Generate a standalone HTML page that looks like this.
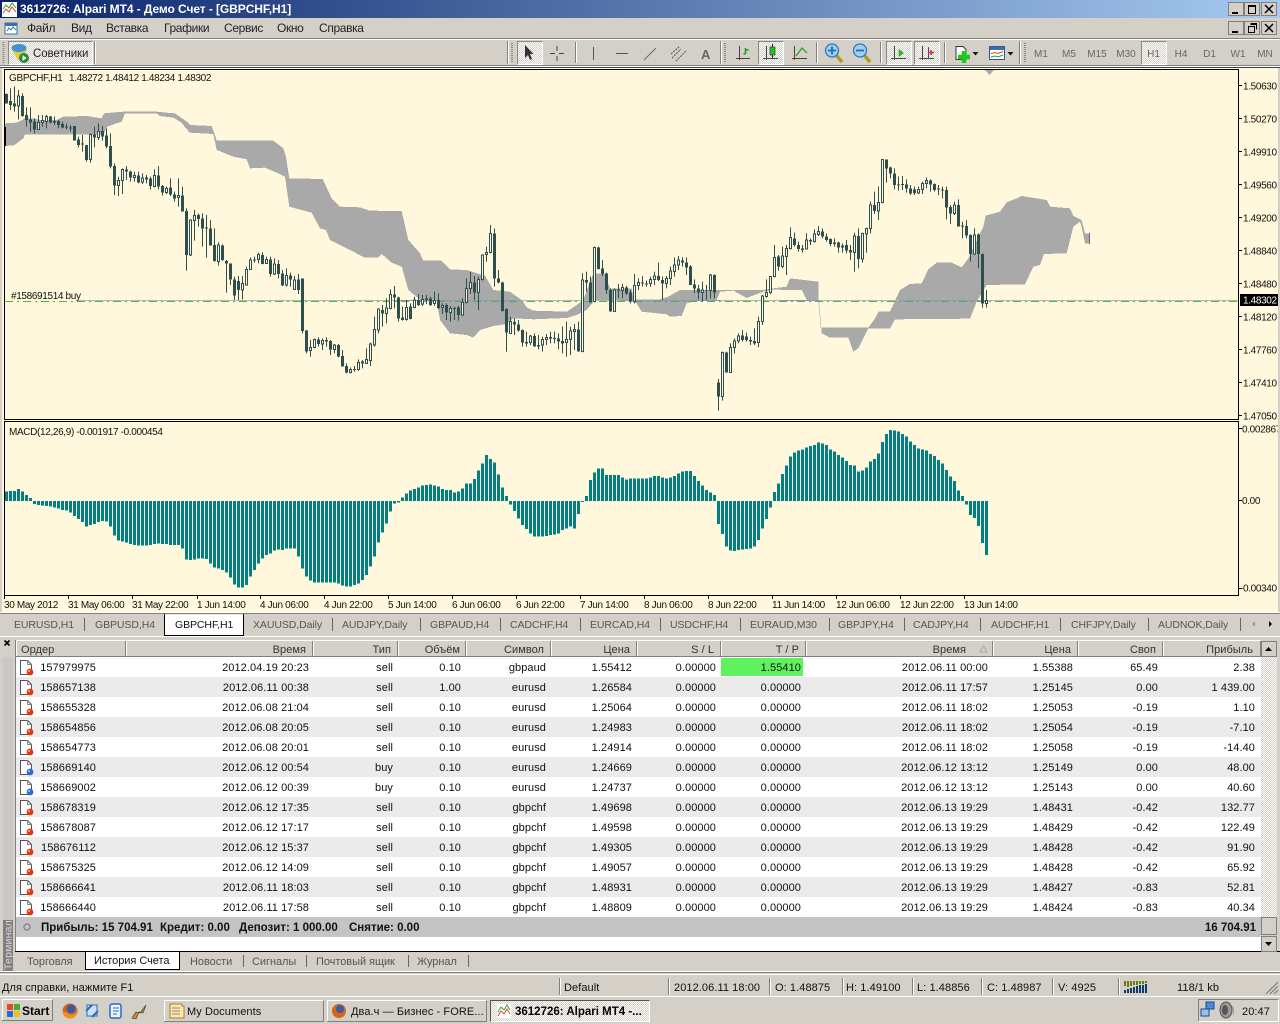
<!DOCTYPE html>
<html><head><meta charset="utf-8"><title>MT4</title>
<style>
html,body{margin:0;padding:0;background:#d4d0c8;width:1280px;height:1024px;overflow:hidden}
svg{display:block;position:absolute;left:0;top:0}
text{font-family:"Liberation Sans",sans-serif;font-size:11px;fill:#000;white-space:pre}
.c{font-size:10px;letter-spacing:-.35px;fill:#111}
.m{font-size:12px;letter-spacing:-.35px;fill:#222}
.tb{font-size:10px;fill:#666}
.tab{font-size:11px;fill:#555;letter-spacing:-.05px}
.ct{font-size:10.5px;fill:#555;letter-spacing:-.08px}
.h{font-size:11px;fill:#333;letter-spacing:.05px}
.r{letter-spacing:.08px;fill:#111}
.b{font-weight:bold}
</style></head><body>
<svg width="1280" height="1024" viewBox="0 0 1280 1024" xmlns="http://www.w3.org/2000/svg">
<defs>
<linearGradient id="tg" x1="0" x2="1" y1="0" y2="0"><stop offset="0" stop-color="#0a246a"/><stop offset="1" stop-color="#a6caf0"/></linearGradient>
<pattern id="ht" width="2" height="2" patternUnits="userSpaceOnUse"><rect width="2" height="2" fill="#d4d0c8"/><rect width="1" height="1" fill="#fff"/><rect x="1" y="1" width="1" height="1" fill="#fff"/></pattern>
<g id="doc"><path d="M.5.5h7l4 4v10H.5z" fill="#fff" stroke="#555"/><path d="M7.5.5v4h4" fill="none" stroke="#888"/></g>
<g id="ds"><use href="#doc"/><circle cx="10" cy="12" r="3.4" fill="#e03a10"/><circle cx="9" cy="11" r="1" fill="#ffb090"/></g>
<g id="db"><use href="#doc"/><circle cx="10" cy="12" r="3.4" fill="#2a6fc8"/><circle cx="9" cy="11" r="1" fill="#a0d0ff"/></g>
</defs>

<!-- base -->
<rect width="1280" height="1024" fill="#d4d0c8"/>
<!-- title bar -->
<rect width="1280" height="18" fill="url(#tg)"/>
<rect x="2" y="2" width="15" height="15" fill="#fff"/>
<path d="M3 9l3-4 3 3 3-5 4 5" fill="none" stroke="#3a9a3a"/><path d="M3 13l3-4 3 3 3-5 4 5" fill="none" stroke="#d05030"/>
<text x="20" y="13" class="b" style="fill:#fff;font-size:12px;letter-spacing:-.08px">3612726: Alpari MT4 - Демо Счет - [GBPCHF,H1]</text>
<g fill="#d4d0c8" stroke="#808080"><rect x="1228.5" y="2.5" width="15" height="13"/><rect x="1244.5" y="2.5" width="15" height="13"/><rect x="1261.5" y="2.5" width="15" height="13"/>
<rect x="1228.5" y="21.5" width="15" height="13"/><rect x="1244.5" y="21.5" width="15" height="13"/><rect x="1261.5" y="21.5" width="15" height="13"/></g>
<g fill="none" stroke="#000"><path d="M1232 13h6M1232 32h6" stroke-width="2"/><path d="M1248.5 5.5h7v8h-7z M1248.5 6.5h7"/><path d="M1265 5l8 8M1273 5l-8 8M1265 24l8 8M1273 24l-8 8" stroke-width="1.5"/><path d="M1250.5 23.5h6v6M1248.5 26.5h6v6h-6z M1250.5 24.5h6"/></g>

<!-- menu -->
<rect x="5" y="23" width="12" height="11" fill="#fff" stroke="#3a6ea5"/><rect x="5" y="23" width="12" height="3" fill="#3a6ea5"/><path d="M7 31l2-3 2 2 2-3 3 3" fill="none" stroke="#3a6ea5"/>
<g class="m"><text x="27" y="32" class="m">Файл</text><text x="71" y="32" class="m">Вид</text><text x="106" y="32" class="m">Вставка</text><text x="164" y="32" class="m">Графики</text><text x="224" y="32" class="m">Сервис</text><text x="277" y="32" class="m">Окно</text><text x="319" y="32" class="m">Справка</text></g>
<rect y="38" width="1280" height="1" fill="#808080"/><rect y="39" width="1280" height="1" fill="#fff"/>

<!-- toolbar -->
<rect y="65" width="1280" height="1" fill="#808080"/><rect y="66" width="1280" height="1" fill="#fff"/><rect y="67" width="1280" height="1" fill="#404040"/>
<path d="M3.5 42V63" stroke="#888" stroke-dasharray="1 1" stroke-width="2" fill="none"/>
<rect x="8.5" y="41.5" width="84" height="23" fill="url(#ht)" stroke="#888"/><path d="M8.5 64.5h84v-23" fill="none" stroke="#fff"/>
<path d="M12 50q6-5 15 0l-6 10h-3z" fill="#e0c840"/><ellipse cx="19" cy="48" rx="7.5" ry="4" fill="#3f94cf"/><circle cx="24" cy="58" r="5" fill="#2a8a3a"/><path d="M22.5 55l4 3-4 3z" fill="#fff"/>
<text x="33" y="57" class="m" style="font-size:11.5px;letter-spacing:-.1px">Советники</text>
<path d="M94.5 41V64" stroke="#808080"/><path d="M95.5 41V64" stroke="#fff"/>
<path d="M507.5 41V64" stroke="#808080"/><path d="M508.5 41V64" stroke="#fff"/>
<path d="M512 43V63" stroke="#888" stroke-dasharray="1 1" stroke-width="2" fill="none"/>
<rect x="517.5" y="41.5" width="25" height="23" fill="url(#ht)" stroke="#888"/><path d="M517.5 64.5h25v-23" fill="none" stroke="#fff"/>
<path d="M525 45v13l3-3 2 5 2-1-2-5h3.500z" fill="#333"/>
<path d="M550 53.500h5M559 53.500h5M557 46v5M557 56v5" stroke="#444" fill="none"/>
<path d="M575.500 42V63" stroke="#808080"/><path d="M576.500 42V63" stroke="#fff"/>
<path d="M593.500 47V60" stroke="#555"/><path d="M616 53.500h12" stroke="#555"/><path d="M644 60l12-12" stroke="#666"/>
<path d="M672 58l9-9M676 61l10-10M671 54l9-8" stroke="#555" stroke-dasharray="2 1" fill="none"/>
<text x="701" y="59" class="b" style="font-size:13px;fill:#666">A</text>
<path d="M720.500 41V64" stroke="#808080"/><path d="M721.500 41V64" stroke="#fff"/>
<path d="M725 43V63" stroke="#888" stroke-dasharray="1 1" stroke-width="2" fill="none"/>
<!-- chart type icons -->
<g fill="none" stroke="#444"><path d="M739.500 46v14M736 58.500h14"/><path d="M794.500 46v14M792 58.500h15"/></g>
<path d="M745.500 48v6M745.500 50h3M745.500 54h-2" stroke="#1a9a1a" fill="none" stroke-width="1.500"/>
<rect x="758.500" y="41.500" width="25" height="23" fill="url(#ht)" stroke="#888"/><path d="M758.500 64.500h25v-23" fill="none" stroke="#fff"/>
<g fill="none" stroke="#444"><path d="M766.500 46v14M763 58.500h15"/></g>
<path d="M772.500 44v14" stroke="#222"/><rect x="770" y="47" width="5" height="8" fill="#1ec81e" stroke="#222" stroke-width=".6"/>
<path d="M796 56l6-8 5 5" fill="none" stroke="#1a9a1a" stroke-width="1.200"/>
<path d="M816.500 42V63" stroke="#808080"/><path d="M817.500 42V63" stroke="#fff"/>
<g><path d="M836 55l6 7" stroke="#b09a20" stroke-width="3.500"/><circle cx="832" cy="50.500" r="6.500" fill="#9fd0f4" stroke="#2a7ac0" stroke-width="1.300"/><path d="M828 50.500h8M832 46.500v8" stroke="#2a6ab0" stroke-width="1.800"/>
<path d="M864 55l6 7" stroke="#b09a20" stroke-width="3.500"/><circle cx="860" cy="50.500" r="6.500" fill="#9fd0f4" stroke="#2a7ac0" stroke-width="1.300"/><path d="M856 50.500h8" stroke="#2a6ab0" stroke-width="1.800"/></g>
<path d="M880.500 42V63" stroke="#808080"/><path d="M881.500 42V63" stroke="#fff"/>
<rect x="886.500" y="41.500" width="25" height="23" fill="url(#ht)" stroke="#888"/><path d="M886.500 64.500h25v-23" fill="none" stroke="#fff"/>
<rect x="914.500" y="41.500" width="25" height="23" fill="url(#ht)" stroke="#888"/><path d="M914.500 64.500h25v-23" fill="none" stroke="#fff"/>
<g fill="none" stroke="#444"><path d="M894.500 46v14M891 58.500h15M922.500 46v14M919 58.500h15"/></g>
<path d="M899 49.500l4.500 3.500-4.500 3.500z" fill="#1ec81e" stroke="#1a8a1a" stroke-width=".5"/>
<path d="M928.500 47v11" stroke="#2a4aa0"/><path d="M928 52.500h6M931 50v5" stroke="#d03010" stroke-width="1.500"/>
<path d="M944.500 42V63" stroke="#808080"/><path d="M945.500 42V63" stroke="#fff"/>
<path d="M956 46.500h7l3 3v10h-10z" fill="#fff" stroke="#333"/>
<path d="M964 51v12M958 57h12" stroke="#1ec81e" stroke-width="4.500"/>
<path d="M972.500 52h6l-3 3.500z M1007.500 52h6l-3 3.500z" fill="#111"/>
<rect x="989.500" y="46.500" width="15" height="13" fill="#fff" stroke="#2a5a9a"/><rect x="990" y="47" width="14" height="3" fill="#3a6ea5"/><path d="M991 53.500l4-1 3 1 5-2" stroke="#d05010" fill="none"/><path d="M991 57l4-1 3 1 5-2" stroke="#2a9a3a" fill="none"/>
<path d="M1019.500 41V64" stroke="#808080"/><path d="M1020.500 41V64" stroke="#fff"/>
<path d="M1025 43V63" stroke="#888" stroke-dasharray="1 1" stroke-width="2" fill="none"/>
<rect x="1141.500" y="41.500" width="25" height="23" fill="url(#ht)" stroke="#888"/><path d="M1141.500 64.500h25v-23" fill="none" stroke="#fff"/>
<g text-anchor="middle"><text x="1041" y="57" class="tb">M1</text><text x="1069" y="57" class="tb">M5</text><text x="1097" y="57" class="tb">M15</text><text x="1126" y="57" class="tb">M30</text><text x="1153.500" y="57" class="tb">H1</text><text x="1181" y="57" class="tb">H4</text><text x="1209.500" y="57" class="tb">D1</text><text x="1238" y="57" class="tb">W1</text><text x="1265" y="57" class="tb">MN</text></g>

<!-- chart frame -->
<rect x="2" y="68" width="1276" height="544" fill="#fff8dc"/>
<rect x="4" y="69" width="1" height="351" fill="#000"/><rect x="4" y="69" width="1235" height="1" fill="#000"/><rect x="1238" y="69" width="1" height="351" fill="#000"/><rect x="4" y="419" width="1235" height="1" fill="#000"/>
<rect x="4" y="421" width="1235" height="1" fill="#000"/><rect x="4" y="421" width="1" height="175" fill="#000"/><rect x="1238" y="421" width="1" height="175" fill="#000"/><rect x="4" y="595" width="1235" height="1" fill="#000"/>
<path d="M985 70h9l-4.500 5z" fill="#a9a9a9"/>

<!-- cloud -->
<g fill="#a9a9a9" shape-rendering="crispEdges">
<polygon transform="translate(0 70) scale(.33333)" points="15,160 50,158 75,145 100,145 120,150 170,150 190,140 260,138 305,145 312,130 370,125 470,125 500,128 525,130 560,155 570,165 635,168 645,195 650,212 820,212 850,235 858,260 868,325 968,327 995,385 1020,410 1080,412 1110,422 1205,423 1225,510 1262,552 1262,690 1225,660 1205,590 1175,578 1145,552 1135,563 1095,563 990,510 978,480 960,475 935,428 868,410 855,320 830,308 795,293 750,295 740,268 700,260 650,240 640,192 570,188 555,172 545,158 520,143 480,138 470,130 375,130 365,155 322,170 310,193 75,193 70,205 42,226 15,228"/>
<polygon transform="translate(420 70) scale(.33333)" points="0,552 10,572 65,572 90,598 140,600 195,617 220,660 270,665 305,690 320,712 340,722 440,725 470,705 490,690 520,610 555,612 570,655 635,655 640,688 720,688 745,680 780,660 1030,660 1060,655 1100,650 1110,625 1195,635 1195,692 1202,772 1262,773 1262,803 1230,803 1205,790 1197,695 1195,692 1160,690 1145,660 1060,659 1030,665 980,684 940,662 900,665 890,690 835,690 800,700 785,738 750,740 740,733 665,725 650,700 630,690 525,690 500,720 470,735 440,744 340,748 280,745 260,762 220,768 180,780 160,803 140,795 90,790 60,750 50,690 0,690"/>
<polygon transform="translate(840 70) scale(.33333)" points="0,773 85,773 105,745 115,725 150,725 180,660 210,642 245,640 265,598 290,578 335,578 365,592 385,565 430,470 437,437 480,425 500,397 530,385 545,378 620,390 630,410 690,415 700,438 725,450 735,490 750,490 750,520 735,520 725,470 720,455 700,470 680,550 612,552 600,585 580,590 555,643 440,645 410,695 390,746 165,748 150,775 85,775 55,835 40,845 25,803 0,803"/>
</g>
<!-- right-end purple sliver -->
<rect x="1089" y="233" width="1" height="11" fill="#6a6a88"/>

<!-- order line -->
<path d="M78 300.500H1238" stroke="#b4b4bc" fill="none"/>
<path d="M400 300.500h120M620 300.500h100M780 300.500h40M900 300.500h80" stroke="#9a90c4" fill="none"/>
<path d="M5 301.500H1238" stroke="#3ec03e" stroke-dasharray="8 4 2 4" fill="none"/>
<text x="11" y="299" class="c">#158691514 buy</text>

<!-- candles -->
<g transform="translate(0 70) scale(1 .33333)" stroke="#2f4f4f" shape-rendering="crispEdges" fill="none">
<path stroke-width="1" d="M6.500 70V100M10.500 55V120M14.500 50V125M18.500 60V148M22.500 70V140M26.500 112V170M30.500 112V185M34.500 145V190M38.500 135V180M42.500 135V170M46.500 135V175M50.500 138V160M54.500 140V165M58.500 150V175M62.500 155V175M66.500 160V178M70.500 165V185M74.500 168V212M78.500 200V232M82.500 195V245M86.500 225V275M90.500 190V278M94.500 170V232M98.500 160V210M102.500 168V212M106.500 175V235M110.500 190V295M114.500 280V375M118.500 320V378M122.500 295V372M126.500 288V330M130.500 302V335M134.500 305V335M138.500 305V340M142.500 310V342M146.500 315V340M150.500 320V358M154.500 298V352M158.500 288V358M162.500 345V377M166.500 350V372M170.500 325V378M174.500 365V395M178.500 325V410M182.500 350V425M186.500 415V602M190.500 448V558M194.500 420V512M198.500 430V470M202.500 430V530M206.500 435V563M210.500 450V527M214.500 475V575M218.500 517V587M222.500 523V573M226.500 570V668M230.500 580V645M234.500 620V690M238.500 618V690M242.500 618V688M246.500 590V647M250.500 562V600M254.500 560V578M258.500 548V580M262.500 547V583M266.500 560V582M270.500 560V620M274.500 565V615M278.500 570V625M282.500 600V648M286.500 595V650M290.500 608V650M294.500 618V660M298.500 612V672M302.500 625V790M306.500 780V850M310.500 810V860M314.500 805V835M318.500 802V830M322.500 805V840M326.500 802V830M330.500 810V855M334.500 822V850M338.500 822V862M342.500 840V890M346.500 880V910M350.500 892V910M354.500 888V905M358.500 868V902M362.500 870V895M366.500 835V882M370.500 818V888M374.500 740V830M378.500 715V790M382.500 705V770M386.500 685V760M390.500 658V718M394.500 648V715M398.500 680V755M402.500 710V752M406.500 690V752M410.500 700V748M414.500 680V715M418.500 672V708M422.500 675V708M426.500 675V702M430.500 680V708M434.500 665V708M438.500 670V718M442.500 700V732M446.500 700V750M450.500 708V755M454.500 710V750M458.500 708V752M462.500 685V738M466.500 625V700M470.500 605V672M474.500 618V690M478.500 620V720M482.500 553V632M486.500 530V575M490.500 465V550M494.500 475V650M498.500 600V640M502.500 635V725M506.500 715V845M510.500 740V792M514.500 745V795M518.500 750V785M522.500 778V830M526.500 785V830M530.500 795V825M534.500 790V830M538.500 795V838M542.500 800V845M546.500 792V825M550.500 785V820M554.500 785V820M558.500 790V838M562.500 770V850M566.500 755V860M570.500 770V855M574.500 762V840M578.500 755V845M582.500 610V847M586.500 605V665M590.500 620V698M594.500 530V697M598.500 530V598M602.500 570V618M606.500 608V672M610.500 655V725M614.500 655V725M618.500 642V685M622.500 642V685M626.500 648V675M630.500 660V700M634.500 612V700M638.500 625V660M642.500 618V650M646.500 632V650M650.500 620V650M654.500 605V645M658.500 578V633M662.500 620V690M666.500 618V655M670.500 590V645M674.500 562V620M678.500 558V600M682.500 562V590M686.500 562V615M690.500 585V645M694.500 628V670M698.500 645V688M702.500 635V695M706.500 645V690M710.500 612V685M714.500 613V685M718.500 927V1022M722.500 845V992M726.500 845V908M730.500 820V908M734.500 805V850M738.500 790V820M742.500 780V815M746.500 788V815M750.500 800V825M754.500 775V825M758.500 740V832M762.500 675V765M766.500 628V683M770.500 618V672M774.500 525V622M778.500 555V602M782.500 530V595M786.500 525V615M790.500 472V538M794.500 488V530M798.500 515V545M802.500 525V548M806.500 490V538M810.500 505V525M814.500 478V518M818.500 468V498M822.500 475V505M826.500 490V515M830.500 505V528M834.500 505V530M838.500 515V548M842.500 520V548M846.500 510V550M850.500 525V570M854.500 488V605M858.500 475V595M862.500 488V578M866.500 473V548M870.500 395V490M874.500 365V432M878.500 350V450M882.500 268V400M886.500 268V338M890.500 290V325M894.500 295V358M898.500 320V362M902.500 318V360M906.500 328V368M910.500 345V375M914.500 350V375M918.500 350V372M922.500 335V372M926.500 322V355M930.500 328V365M934.500 340V365M938.500 345V375M942.500 350V385M946.500 350V448M950.500 405V462M954.500 395V435M958.500 388V470M962.500 455V505M966.500 450V505M970.500 493V575M974.500 475V555M978.500 490V595M982.500 550V713M986.500 660V713"/>
<path stroke-width="3" d="M6.500 72V100M10.500 93V105M14.500 101V110M22.500 78V138M26.500 135V150M30.500 148V158M34.500 155V178M50.500 140V158M54.500 153V158M58.500 153V165M62.500 162V172M66.500 170V173M70.500 172V175M74.500 168V212M78.500 208V225M82.500 220V223M86.500 225V270M94.500 193V203M102.500 183V200M106.500 197V230M110.500 228V290M114.500 288V347M126.500 298V304M130.500 305V323M138.500 316V338M146.500 322V329M150.500 325V348M158.500 316V350M162.500 348V367M170.500 352V373M174.500 373V385M182.500 377V425M186.500 423V555M198.500 435V447M202.500 445V475M206.500 473V476M210.500 475V527M214.500 525V573M222.500 527V570M226.500 573V580M230.500 580V628M234.500 628V677M238.500 633V660M254.500 568V572M262.500 555V582M270.500 568V612M278.500 582V612M282.500 610V647M290.500 617V628M298.500 628V660M302.500 625V783M306.500 782V845M318.500 808V822M326.500 810V815M330.500 813V838M338.500 825V860M342.500 858V890M346.500 888V907M354.500 897V900M362.500 874V880M382.500 720V730M394.500 673V683M398.500 682V745M402.500 742V750M410.500 710V747M418.500 690V705M426.500 685V690M430.500 685V705M438.500 690V714M446.500 705V728M454.500 714V717M458.500 712V735M474.500 637V668M494.500 490V625M498.500 625V638M502.500 637V723M506.500 717V788M514.500 756V764M518.500 763V782M522.500 780V818M526.500 816V821M534.500 798V830M538.500 825V830M550.500 801V806M554.500 804V807M558.500 805V815M562.500 813V820M578.500 778V845M586.500 630V638M590.500 637V697M598.500 532V597M602.500 595V612M606.500 610V660M610.500 660V725M618.500 658V661M626.500 652V670M630.500 668V695M642.500 637V640M646.500 640V643M658.500 618V630M662.500 630V640M682.500 572V578M686.500 577V592M690.500 590V645M694.500 643V655M698.500 655V668M706.500 661V663M714.500 615V668M718.500 937V980M726.500 847V908M742.500 797V810M746.500 800V810M750.500 810V815M754.500 813V820M778.500 560V590M794.500 505V525M798.500 525V537M802.500 535V540M810.500 510V515M822.500 484V500M826.500 500V510M830.500 507V522M834.500 518V522M838.500 517V533M842.500 527V532M846.500 525V542M850.500 540V548M858.500 498V567M874.500 405V423M886.500 268V296M890.500 293V310M894.500 310V345M898.500 343V347M902.500 342V345M906.500 343V355M910.500 355V370M914.500 358V369M930.500 332V343M934.500 342V360M938.500 355V358M942.500 358V361M946.500 360V413M950.500 411V431M958.500 405V470M962.500 467V470M966.500 468V497M970.500 495V552M978.500 493V552M982.500 552V700"/>
<path fill="#fff8dc" stroke-width="1" style="vector-effect:non-scaling-stroke" d="M17.500 78h2V108h-2zM37.500 157h2V178h-2zM41.500 151h2V157h-2zM45.500 140h2V155h-2zM89.500 193h2V268h-2zM97.500 185h2V203h-2zM117.500 332h2V347h-2zM121.500 298h2V332h-2zM133.500 317h2V323h-2zM141.500 324h2V336h-2zM153.500 316h2V350h-2zM165.500 355h2V367h-2zM177.500 377h2V383h-2zM189.500 450h2V555h-2zM193.500 436h2V452h-2zM217.500 525h2V575h-2zM241.500 640h2V660h-2zM245.500 598h2V645h-2zM249.500 570h2V598h-2zM257.500 553h2V568h-2zM265.500 568h2V580h-2zM273.500 582h2V612h-2zM285.500 617h2V645h-2zM293.500 630h2V658h-2zM309.500 832h2V842h-2zM313.500 808h2V832h-2zM321.500 812h2V822h-2zM333.500 825h2V838h-2zM349.500 898h2V907h-2zM357.500 877h2V898h-2zM365.500 868h2V880h-2zM369.500 822h2V872h-2zM373.500 778h2V825h-2zM377.500 717h2V780h-2zM385.500 714h2V730h-2zM389.500 673h2V716h-2zM405.500 712h2V748h-2zM413.500 690h2V712h-2zM421.500 688h2V702h-2zM433.500 692h2V700h-2zM441.500 706h2V712h-2zM449.500 715h2V728h-2zM461.500 697h2V735h-2zM465.500 655h2V697h-2zM469.500 637h2V655h-2zM477.500 628h2V668h-2zM481.500 555h2V628h-2zM485.500 547h2V553h-2zM489.500 490h2V548h-2zM509.500 755h2V790h-2zM529.500 798h2V818h-2zM541.500 808h2V825h-2zM545.500 802h2V808h-2zM565.500 808h2V818h-2zM569.500 783h2V808h-2zM573.500 778h2V785h-2zM581.500 630h2V845h-2zM593.500 532h2V695h-2zM613.500 660h2V725h-2zM621.500 652h2V662h-2zM633.500 646h2V695h-2zM637.500 637h2V647h-2zM649.500 628h2V640h-2zM653.500 618h2V628h-2zM665.500 625h2V640h-2zM669.500 603h2V626h-2zM673.500 585h2V605h-2zM677.500 570h2V585h-2zM701.500 660h2V668h-2zM709.500 615h2V662h-2zM721.500 847h2V980h-2zM729.500 832h2V908h-2zM733.500 813h2V832h-2zM737.500 798h2V813h-2zM757.500 754h2V818h-2zM761.500 678h2V754h-2zM765.500 668h2V680h-2zM769.500 619h2V668h-2zM773.500 562h2V620h-2zM781.500 558h2V590h-2zM785.500 535h2V560h-2zM789.500 502h2V535h-2zM805.500 510h2V537h-2zM813.500 492h2V515h-2zM817.500 484h2V494h-2zM853.500 498h2V548h-2zM861.500 491h2V567h-2zM865.500 475h2V492h-2zM869.500 405h2V476h-2zM877.500 397h2V423h-2zM881.500 268h2V397h-2zM917.500 358h2V369h-2zM921.500 340h2V359h-2zM925.500 332h2V341h-2zM953.500 405h2V430h-2zM973.500 495h2V552h-2zM985.500 692h2V700h-2z"/>
</g>
<rect x="5" y="127" width="1" height="19" fill="#000"/>

<!-- chart legend -->
<text x="9" y="81" class="c" style="letter-spacing:-.3px">GBPCHF,H1</text><text x="69" y="81" class="c">1.48272 1.48412 1.48234 1.48302</text>
<text x="9" y="435" class="c">MACD(12,26,9) -0.001917 -0.000454</text>

<!-- price axis -->
<path d="M1239 85.500h3M1239 118.500h3M1239 151.500h3M1239 184.500h3M1239 217.500h3M1239 250.500h3M1239 283.500h3M1239 316.500h3M1239 349.500h3M1239 382.500h3M1239 415.500h3M1239 428.500h3M1239 500.500h3M1239 588.500h3" stroke="#000"/>
<g class="c"><text x="1243" y="89.500" class="c">1.50630</text><text x="1243" y="122.500" class="c">1.50270</text><text x="1243" y="155.500" class="c">1.49910</text><text x="1243" y="188.500" class="c">1.49560</text><text x="1243" y="221.500" class="c">1.49200</text><text x="1243" y="254.500" class="c">1.48840</text><text x="1243" y="287.500" class="c">1.48480</text><text x="1243" y="320.500" class="c">1.48120</text><text x="1243" y="353.500" class="c">1.47760</text><text x="1243" y="386.500" class="c">1.47410</text><text x="1243" y="419.500" class="c">1.47050</text></g>
<rect x="1240" y="294" width="38" height="12" fill="#000"/><text x="1243" y="303.500" class="c" style="fill:#fff">1.48302</text>
<svg x="1240" y="420" width="38" height="180"><text x="2" y="12.500" class="c">0.002867</text><text x="2" y="84" class="c">0.00</text><text x="0" y="171.500" class="c">-0.00340</text></svg>

<!-- MACD -->
<path transform="translate(0 420) scale(1 .33333)" shape-rendering="crispEdges" fill="#008080" d="M5 243V215h3V243h1V213h3V243h1V213h3V243h1V207h3V243h1V215h3V243h1V225h3V243h1V234h3V243h1V252h3V243h1V255h3V243h1V257h3V243h1V258h3V243h1V260h3V243h1V263h3V243h1V266h3V243h1V270h3V243h1V272h3V243h1V278h3V243h1V288h3V243h1V297h3V243h1V306h3V243h1V320h3V243h1V315h3V243h1V312h3V243h1V306h3V243h1V303h3V243h1V305h3V243h1V320h3V243h1V347h3V243h1V362h3V243h1V365h3V243h1V368h3V243h1V372h3V243h1V375h3V243h1V376h3V243h1V377h3V243h1V377h3V243h1V375h3V243h1V372h3V243h1V370h3V243h1V372h3V243h1V372h3V243h1V375h3V243h1V375h3V243h1V375h3V243h1V385h3V243h1V418h3V243h1V420h3V243h1V418h3V243h1V415h3V243h1V415h3V243h1V417h3V243h1V430h3V243h1V443h3V243h1V445h3V243h1V450h3V243h1V458h3V243h1V473h3V243h1V493h3V243h1V502h3V243h1V503h3V243h1V495h3V243h1V470h3V243h1V450h3V243h1V430h3V243h1V415h3V243h1V405h3V243h1V400h3V243h1V392h3V243h1V388h3V243h1V390h3V243h1V385h3V243h1V385h3V243h1V385h3V243h1V410h3V243h1V445h3V243h1V470h3V243h1V482h3V243h1V488h3V243h1V488h3V243h1V488h3V243h1V488h3V243h1V488h3V243h1V488h3V243h1V490h3V243h1V497h3V243h1V500h3V243h1V500h3V243h1V495h3V243h1V490h3V243h1V480h3V243h1V465h3V243h1V440h3V243h1V410h3V243h1V368h3V243h1V338h3V243h1V310h3V243h1V275h3V243h1V250h3V243h1V247h3V243h1V232h3V243h1V220h3V243h1V212h3V243h1V207h3V243h1V203h3V243h1V196h3V243h1V195h3V243h1V193h3V243h1V197h3V243h1V200h3V243h1V207h3V243h1V210h3V243h1V210h3V243h1V217h3V243h1V215h3V243h1V205h3V243h1V190h3V243h1V190h3V243h1V177h3V243h1V152h3V243h1V130h3V243h1V105h3V243h1V117h3V243h1V128h3V243h1V163h3V243h1V202h3V243h1V228h3V243h1V253h3V243h1V273h3V243h1V296h3V243h1V315h3V243h1V327h3V243h1V340h3V243h1V350h3V243h1V350h3V243h1V350h3V243h1V348h3V243h1V345h3V243h1V343h3V243h1V340h3V243h1V330h3V243h1V325h3V243h1V320h3V243h1V326h3V243h1V282h3V243h1V246h3V243h1V228h3V243h1V180h3V243h1V157h3V243h1V145h3V243h1V145h3V243h1V165h3V243h1V165h3V243h1V165h3V243h1V165h3V243h1V172h3V243h1V178h3V243h1V175h3V243h1V175h3V243h1V175h3V243h1V175h3V243h1V175h3V243h1V172h3V243h1V168h3V243h1V168h3V243h1V173h3V243h1V175h3V243h1V172h3V243h1V168h3V243h1V160h3V243h1V155h3V243h1V153h3V243h1V153h3V243h1V168h3V243h1V183h3V243h1V197h3V243h1V210h3V243h1V217h3V243h1V225h3V243h1V312h3V243h1V342h3V243h1V380h3V243h1V392h3V243h1V393h3V243h1V390h3V243h1V388h3V243h1V387h3V243h1V385h3V243h1V380h3V243h1V360h3V243h1V325h3V243h1V297h3V243h1V262h3V243h1V216h3V243h1V190h3V243h1V162h3V243h1V137h3V243h1V110h3V243h1V97h3V243h1V92h3V243h1V88h3V243h1V82h3V243h1V78h3V243h1V75h3V243h1V68h3V243h1V70h3V243h1V75h3V243h1V88h3V243h1V95h3V243h1V105h3V243h1V113h3V243h1V123h3V243h1V135h3V243h1V137h3V243h1V155h3V243h1V152h3V243h1V143h3V243h1V125h3V243h1V117h3V243h1V100h3V243h1V66h3V243h1V42h3V243h1V30h3V243h1V32h3V243h1V35h3V243h1V42h3V243h1V50h3V243h1V65h3V243h1V75h3V243h1V85h3V243h1V88h3V243h1V92h3V243h1V102h3V243h1V108h3V243h1V120h3V243h1V130h3V243h1V150h3V243h1V170h3V243h1V183h3V243h1V212h3V243h1V228h3V243h1V254h3V243h1V285h3V243h1V294h3V243h1V318h3V243h1V369h3V243h1V405h3V243z"/>

<!-- time axis -->
<path d="M4.500 596v3M68.500 596v3M132.500 596v3M197.500 596v3M260.500 596v3M324.500 596v3M388.500 596v3M452.500 596v3M516.500 596v3M580.500 596v3M644.500 596v3M708.500 596v3M772.500 596v3M836.500 596v3M900.500 596v3M964.500 596v3" stroke="#000"/>
<g><text x="4" y="608" class="c">30 May 2012</text><text x="68" y="608" class="c">31 May 06:00</text><text x="132" y="608" class="c">31 May 22:00</text><text x="197" y="608" class="c">1 Jun 14:00</text><text x="260" y="608" class="c">4 Jun 06:00</text><text x="324" y="608" class="c">4 Jun 22:00</text><text x="388" y="608" class="c">5 Jun 14:00</text><text x="452" y="608" class="c">6 Jun 06:00</text><text x="516" y="608" class="c">6 Jun 22:00</text><text x="580" y="608" class="c">7 Jun 14:00</text><text x="644" y="608" class="c">8 Jun 06:00</text><text x="708" y="608" class="c">8 Jun 22:00</text><text x="772" y="608" class="c">11 Jun 14:00</text><text x="836" y="608" class="c">12 Jun 06:00</text><text x="900" y="608" class="c">12 Jun 22:00</text><text x="964" y="608" class="c">13 Jun 14:00</text></g>

<!-- chart tabs -->
<rect y="612" width="1280" height="1" fill="#fff"/><rect y="613" width="1280" height="1" fill="#808080"/>
<rect x="164.500" y="614.500" width="79" height="21" fill="#fff"/><path d="M164.500 614v21.500h79V614" fill="none" stroke="#000"/>
<g text-anchor="start">
<text x="14" y="628" class="ct">EURUSD,H1</text><text x="95" y="628" class="ct">GBPUSD,H4</text><text x="175" y="628" class="ct" style="fill:#111">GBPCHF,H1</text><text x="253" y="628" class="ct">XAUUSD,Daily</text><text x="342" y="628" class="ct">AUDJPY,Daily</text><text x="430" y="628" class="ct">GBPAUD,H4</text><text x="510" y="628" class="ct">CADCHF,H4</text><text x="590" y="628" class="ct">EURCAD,H4</text><text x="670" y="628" class="ct">USDCHF,H4</text><text x="750" y="628" class="ct">EURAUD,M30</text><text x="838" y="628" class="ct">GBPJPY,H4</text><text x="913" y="628" class="ct">CADJPY,H4</text><text x="991" y="628" class="ct">AUDCHF,H1</text><text x="1071" y="628" class="ct">CHFJPY,Daily</text><text x="1158" y="628" class="ct">AUDNOK,Daily</text></g>
<path d="M84.500 618v13M332.500 618v13M420.500 618v13M500.500 618v13M580.500 618v13M660.500 618v13M740.500 618v13M829.500 618v13M904.500 618v13M980.500 618v13M1060.500 618v13M1148.500 618v13M1240.500 618v13" stroke="#666"/>
<path d="M1255 621v6l-3-3z" fill="#999"/><path d="M1269 621v6l3-3z" fill="#000"/>
<rect y="636" width="1280" height="1" fill="#fff"/>

<!-- terminal left strip -->
<rect x="3" y="657" width="10" height="263" fill="#c8c8c4"/>
<rect x="3" y="920" width="10" height="51" fill="#808080"/>
<text transform="translate(11.500 970) rotate(-90)" style="font-size:10.500px;fill:#d8d8d8;letter-spacing:.2px">Терминал</text>
<path d="M4.500 640.500l5 5M9.500 640.500l-5 5" stroke="#000" stroke-width="1.600"/>
<rect x="15" y="640" width="1" height="312" fill="#808080"/>

<!-- table header -->
<rect x="16" y="641" width="1245" height="16" fill="#d4d0c8"/>
<path d="M16 656.500H1261" stroke="#808080"/><path d="M16 640.500H1261" stroke="#fff"/>
<path d="M125.500 641v15M312.500 641v15M397.500 641v15M465.500 641v15M550.500 641v15M636.500 641v15M720.500 641v15M805.500 641v15M992.500 641v15M1077.500 641v15M1162.500 641v15M1260.500 641v15" stroke="#808080"/>
<path d="M126.500 641v15M313.500 641v15M398.500 641v15M466.500 641v15M551.500 641v15M637.500 641v15M721.500 641v15M806.500 641v15M993.500 641v15M1078.500 641v15M1163.500 641v15M16.500 641v15" stroke="#fff"/>
<text x="21" y="653" class="h">Ордер</text>
<g text-anchor="end"><text x="306" y="653" class="h">Время</text><text x="391" y="653" class="h">Тип</text><text x="460" y="653" class="h">Объём</text><text x="544" y="653" class="h">Символ</text><text x="630" y="653" class="h">Цена</text><text x="714" y="653" class="h">S / L</text><text x="799" y="653" class="h">T / P</text><text x="966" y="653" class="h">Время</text><text x="1071" y="653" class="h">Цена</text><text x="1156" y="653" class="h">Своп</text><text x="1253" y="653" class="h">Прибыль</text></g>
<path d="M983.500 645.500l-3.500 6.500h7z" fill="none" stroke="#aaa"/>

<!-- table body -->
<rect x="16" y="657" width="1245" height="294" fill="#fff"/>
<g fill="#ebebeb"><rect x="16" y="677" width="1245" height="20"/><rect x="16" y="717" width="1245" height="20"/><rect x="16" y="757" width="1245" height="20"/><rect x="16" y="797" width="1245" height="20"/><rect x="16" y="837" width="1245" height="20"/><rect x="16" y="877" width="1245" height="20"/></g>
<rect x="721" y="658" width="82" height="18" fill="#60f25e"/>
<rect x="16" y="917" width="1245" height="20" fill="#c4c4c4"/>
<rect x="15" y="951" width="1265" height="1" fill="#000"/>
<use href="#ds" x="20" y="660"/><use href="#ds" x="20" y="680"/><use href="#ds" x="20" y="700"/><use href="#ds" x="20" y="720"/><use href="#ds" x="20" y="740"/><use href="#db" x="20" y="760"/><use href="#db" x="20" y="780"/><use href="#ds" x="20" y="800"/><use href="#ds" x="20" y="820"/><use href="#ds" x="20" y="840"/><use href="#ds" x="20" y="860"/><use href="#ds" x="20" y="880"/><use href="#ds" x="20" y="900"/>
<g text-anchor="end">
<text y="671" class="r"><tspan x="96">157979975</tspan><tspan x="309">2012.04.19 20:23</tspan><tspan x="393">sell</tspan><tspan x="461">0.10</tspan><tspan x="546">gbpaud</tspan><tspan x="632">1.55412</tspan><tspan x="716">0.00000</tspan><tspan x="801">1.55410</tspan><tspan x="988">2012.06.11 00:00</tspan><tspan x="1073">1.55388</tspan><tspan x="1158">65.49</tspan><tspan x="1255">2.38</tspan></text>
<text y="691" class="r"><tspan x="96">158657138</tspan><tspan x="309">2012.06.11 00:38</tspan><tspan x="393">sell</tspan><tspan x="461">1.00</tspan><tspan x="546">eurusd</tspan><tspan x="632">1.26584</tspan><tspan x="716">0.00000</tspan><tspan x="801">0.00000</tspan><tspan x="988">2012.06.11 17:57</tspan><tspan x="1073">1.25145</tspan><tspan x="1158">0.00</tspan><tspan x="1255">1 439.00</tspan></text>
<text y="711" class="r"><tspan x="96">158655328</tspan><tspan x="309">2012.06.08 21:04</tspan><tspan x="393">sell</tspan><tspan x="461">0.10</tspan><tspan x="546">eurusd</tspan><tspan x="632">1.25064</tspan><tspan x="716">0.00000</tspan><tspan x="801">0.00000</tspan><tspan x="988">2012.06.11 18:02</tspan><tspan x="1073">1.25053</tspan><tspan x="1158">-0.19</tspan><tspan x="1255">1.10</tspan></text>
<text y="731" class="r"><tspan x="96">158654856</tspan><tspan x="309">2012.06.08 20:05</tspan><tspan x="393">sell</tspan><tspan x="461">0.10</tspan><tspan x="546">eurusd</tspan><tspan x="632">1.24983</tspan><tspan x="716">0.00000</tspan><tspan x="801">0.00000</tspan><tspan x="988">2012.06.11 18:02</tspan><tspan x="1073">1.25054</tspan><tspan x="1158">-0.19</tspan><tspan x="1255">-7.10</tspan></text>
<text y="751" class="r"><tspan x="96">158654773</tspan><tspan x="309">2012.06.08 20:01</tspan><tspan x="393">sell</tspan><tspan x="461">0.10</tspan><tspan x="546">eurusd</tspan><tspan x="632">1.24914</tspan><tspan x="716">0.00000</tspan><tspan x="801">0.00000</tspan><tspan x="988">2012.06.11 18:02</tspan><tspan x="1073">1.25058</tspan><tspan x="1158">-0.19</tspan><tspan x="1255">-14.40</tspan></text>
<text y="771" class="r"><tspan x="96">158669140</tspan><tspan x="309">2012.06.12 00:54</tspan><tspan x="393">buy</tspan><tspan x="461">0.10</tspan><tspan x="546">eurusd</tspan><tspan x="632">1.24669</tspan><tspan x="716">0.00000</tspan><tspan x="801">0.00000</tspan><tspan x="988">2012.06.12 13:12</tspan><tspan x="1073">1.25149</tspan><tspan x="1158">0.00</tspan><tspan x="1255">48.00</tspan></text>
<text y="791" class="r"><tspan x="96">158669002</tspan><tspan x="309">2012.06.12 00:39</tspan><tspan x="393">buy</tspan><tspan x="461">0.10</tspan><tspan x="546">eurusd</tspan><tspan x="632">1.24737</tspan><tspan x="716">0.00000</tspan><tspan x="801">0.00000</tspan><tspan x="988">2012.06.12 13:12</tspan><tspan x="1073">1.25143</tspan><tspan x="1158">0.00</tspan><tspan x="1255">40.60</tspan></text>
<text y="811" class="r"><tspan x="96">158678319</tspan><tspan x="309">2012.06.12 17:35</tspan><tspan x="393">sell</tspan><tspan x="461">0.10</tspan><tspan x="546">gbpchf</tspan><tspan x="632">1.49698</tspan><tspan x="716">0.00000</tspan><tspan x="801">0.00000</tspan><tspan x="988">2012.06.13 19:29</tspan><tspan x="1073">1.48431</tspan><tspan x="1158">-0.42</tspan><tspan x="1255">132.77</tspan></text>
<text y="831" class="r"><tspan x="96">158678087</tspan><tspan x="309">2012.06.12 17:17</tspan><tspan x="393">sell</tspan><tspan x="461">0.10</tspan><tspan x="546">gbpchf</tspan><tspan x="632">1.49598</tspan><tspan x="716">0.00000</tspan><tspan x="801">0.00000</tspan><tspan x="988">2012.06.13 19:29</tspan><tspan x="1073">1.48429</tspan><tspan x="1158">-0.42</tspan><tspan x="1255">122.49</tspan></text>
<text y="851" class="r"><tspan x="96">158676112</tspan><tspan x="309">2012.06.12 15:37</tspan><tspan x="393">sell</tspan><tspan x="461">0.10</tspan><tspan x="546">gbpchf</tspan><tspan x="632">1.49305</tspan><tspan x="716">0.00000</tspan><tspan x="801">0.00000</tspan><tspan x="988">2012.06.13 19:29</tspan><tspan x="1073">1.48428</tspan><tspan x="1158">-0.42</tspan><tspan x="1255">91.90</tspan></text>
<text y="871" class="r"><tspan x="96">158675325</tspan><tspan x="309">2012.06.12 14:09</tspan><tspan x="393">sell</tspan><tspan x="461">0.10</tspan><tspan x="546">gbpchf</tspan><tspan x="632">1.49057</tspan><tspan x="716">0.00000</tspan><tspan x="801">0.00000</tspan><tspan x="988">2012.06.13 19:29</tspan><tspan x="1073">1.48428</tspan><tspan x="1158">-0.42</tspan><tspan x="1255">65.92</tspan></text>
<text y="891" class="r"><tspan x="96">158666641</tspan><tspan x="309">2012.06.11 18:03</tspan><tspan x="393">sell</tspan><tspan x="461">0.10</tspan><tspan x="546">gbpchf</tspan><tspan x="632">1.48931</tspan><tspan x="716">0.00000</tspan><tspan x="801">0.00000</tspan><tspan x="988">2012.06.13 19:29</tspan><tspan x="1073">1.48427</tspan><tspan x="1158">-0.83</tspan><tspan x="1255">52.81</tspan></text>
<text y="911" class="r"><tspan x="96">158666440</tspan><tspan x="309">2012.06.11 17:58</tspan><tspan x="393">sell</tspan><tspan x="461">0.10</tspan><tspan x="546">gbpchf</tspan><tspan x="632">1.48809</tspan><tspan x="716">0.00000</tspan><tspan x="801">0.00000</tspan><tspan x="988">2012.06.13 19:29</tspan><tspan x="1073">1.48424</tspan><tspan x="1158">-0.83</tspan><tspan x="1255">40.34</tspan></text>
</g>
<circle cx="27" cy="927" r="3" fill="none" stroke="#888" stroke-width="1.500"/>
<g class="b" style="font-size:11.500px"><text x="41" y="931" class="b" style="fill:#111;font-size:11.500px">Прибыль: 15 704.91</text><text x="160" y="931" class="b" style="fill:#111;font-size:11.500px">Кредит: 0.00</text><text x="239" y="931" class="b" style="fill:#111;font-size:11.500px">Депозит: 1 000.00</text><text x="349" y="931" class="b" style="fill:#111;font-size:11.500px">Снятие: 0.00</text></g>
<text x="1256" y="931" class="b" text-anchor="end" style="fill:#111;font-size:11.500px">16 704.91</text>

<!-- scrollbar -->
<rect x="1261" y="657" width="16" height="260" fill="url(#ht)"/>
<g fill="#d4d0c8" stroke="#808080"><rect x="1261.500" y="641.500" width="15" height="15"/><rect x="1261.500" y="917.500" width="15" height="17"/><rect x="1261.500" y="936.500" width="15" height="15"/></g>
<path d="M1265 651h7l-3.500-4zM1265 942h7l-3.500 4z" fill="#000"/>

<!-- terminal tabs -->
<rect x="86" y="952" width="94" height="17" fill="#fff"/><path d="M85.500 952v17.500h94V952" fill="none" stroke="#000"/>
<text x="27" y="965" class="tab">Торговля</text><text x="94" y="964" class="tab" style="fill:#111">История Счета</text><text x="190" y="965" class="tab">Новости</text><text x="252" y="965" class="tab">Сигналы</text><text x="316" y="965" class="tab">Почтовый ящик</text><text x="417" y="965" class="tab">Журнал</text>
<path d="M243.500 955v12M306.500 955v12M408.500 955v12M468.500 955v12" stroke="#666"/>
<rect y="971" width="1280" height="1" fill="#fff"/><rect y="972" width="1280" height="1" fill="#808080"/><rect y="974" width="1280" height="1" fill="#fff"/>

<!-- status -->
<g style="font-size:11px"><text x="2" y="991" class="r">Для справки, нажмите F1</text><text x="564" y="991" class="r">Default</text><text x="674" y="991" class="r">2012.06.11 18:00</text><text x="775" y="991" class="r">O: 1.48875</text><text x="846" y="991" class="r">H: 1.49100</text><text x="917" y="991" class="r">L: 1.48856</text><text x="987" y="991" class="r">C: 1.48987</text><text x="1058" y="991" class="r">V: 4925</text><text x="1177" y="991" class="r">118/1 kb</text></g>
<path d="M559.500 978v17M668.500 978v17M769.500 978v17M842.500 978v17M912.500 978v17M981.500 978v17M1052.500 978v17M1118.500 978v17" stroke="#808080"/>
<path d="M560.500 978v17M669.500 978v17M770.500 978v17M843.500 978v17M913.500 978v17M982.500 978v17M1053.500 978v17M1119.500 978v17" stroke="#fff"/>
<path d="M1125 981v5M1128 981v6M1131 981v5M1134 981v4M1137 981v4M1140 981v3M1143 981v3M1146 981v2" stroke="#6b7b10" stroke-width="2"/>
<path d="M1125 990v3M1128 989v4M1131 988v5M1134 987v6M1137 986v7M1140 985v8M1143 985v8M1146 984v9" stroke="#0b3d6b" stroke-width="2"/>
<path d="M1266 994l12-12M1270 994l8-8M1274 994l4-4" stroke="#808080" stroke-width="1.200"/>

<!-- taskbar -->
<rect y="996" width="1280" height="1" fill="#fff"/>
<rect x="2.500" y="999.500" width="50" height="21" fill="#d4d0c8" stroke="#808080"/><path d="M2.500 1020V999.500h50" stroke="#fff" fill="none"/>
<rect x="7" y="1004" width="6" height="6" fill="#e04a20"/><rect x="14" y="1004" width="6" height="6" fill="#4aaa30"/><rect x="7" y="1011" width="6" height="6" fill="#2a6ad0"/><rect x="14" y="1011" width="6" height="6" fill="#e8c020"/>
<text x="22" y="1015" class="b" style="font-size:12px">Start</text>
<circle cx="70" cy="1011" r="7.500" fill="#d8641a"/><circle cx="71" cy="1009" r="4.500" fill="#3a5aa8"/><path d="M62.500 1011a7.500 7.500 0 0 0 15 0q-5 6-10 2z" fill="#f09020"/>
<rect x="87" y="1005" width="10" height="11" fill="#cfe2f5" stroke="#2a6ac0"/><path d="M86 1011l6-6M98 1011l-6 6" stroke="#2a6ac0" stroke-width="2"/>
<rect x="110" y="1004" width="11" height="14" rx="2" fill="#eef4ff" stroke="#2a6ac0" stroke-width="1.500"/><path d="M113 1008h6M113 1011h6M113 1014h4" stroke="#2a6ac0"/>
<path d="M132 1018l4-6 4 1 6-8-3 8-4-1-3 7z" fill="#c89020" stroke="#444" stroke-width=".7"/>
<rect x="164.500" y="1000.500" width="159" height="21" fill="#d4d0c8" stroke="#808080"/><path d="M164.500 1021V1000.500h159" stroke="#fff" fill="none"/>
<path d="M170 1004h12v2h2v12h-14z" fill="#ffe8a0" stroke="#a08040"/><path d="M172 1008h8M172 1011h8M172 1014h8" stroke="#88a"/>
<text x="187" y="1015" class="r">My Documents</text>
<rect x="327.500" y="1000.500" width="159" height="21" fill="#d4d0c8" stroke="#808080"/><path d="M327.500 1021V1000.500h159" stroke="#fff" fill="none"/>
<circle cx="339" cy="1011" r="7" fill="#d8641a"/><circle cx="340" cy="1009" r="4" fill="#3a5aa8"/>
<text x="351" y="1015" class="r">Два.ч — Бизнес - FORE...</text>
<rect x="490.500" y="1000.500" width="159" height="21" fill="url(#ht)" stroke="#555"/><path d="M490.500 1021.500h159V1000.500" stroke="#fff" fill="none"/>
<rect x="497" y="1004" width="14" height="14" fill="#fff"/><path d="M498 1012l3-5 3 3 3-5 3 5" fill="none" stroke="#3a9a3a"/><path d="M498 1016l3-5 3 3 3-5 3 5" fill="none" stroke="#d05030"/>
<text x="515" y="1015" class="b" style="font-size:11.500px">3612726: Alpari MT4 -...</text>
<rect x="1198.500" y="999.500" width="80" height="22" fill="none" stroke="#808080"/><path d="M1198.500 1021.500h80v-22" fill="none" stroke="#fff"/>
<rect x="1206" y="1002" width="8" height="7" fill="#4a8ad8" stroke="#1a4a98"/><rect x="1201" y="1009" width="8" height="7" fill="#9ac0ec" stroke="#1a4a98"/>
<ellipse cx="1226" cy="1010" rx="6" ry="8" fill="#999" stroke="#555"/><ellipse cx="1225" cy="1010" rx="3" ry="5" fill="#555"/><path d="M1232 1006q3 4 1 9" stroke="#99b" fill="none"/>
<text x="1242" y="1015" class="r">20:47</text>
</svg>
</body></html>
